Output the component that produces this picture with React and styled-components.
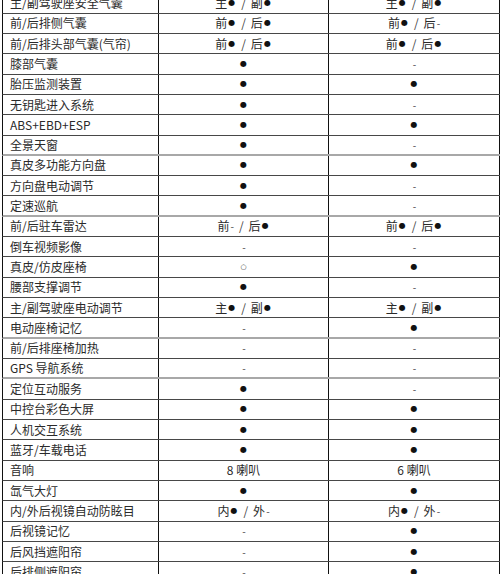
import React from 'react'
import styled, { createGlobalStyle } from 'styled-components'

const GlobalStyle = createGlobalStyle`
  html, body {
    margin: 0;
    padding: 0;
    background: #fff;
    overflow: hidden;
  }
`

const rowHeight = 20.33

const Table = styled.div`
  width: 498px;
  margin: -6.8px 0 0 2px;
  font-family: 'Noto Sans CJK SC', 'Noto Sans', sans-serif;
  font-size: 12px;
  color: #2a2a2a;
`

const Row = styled.div`
  display: grid;
  grid-template-columns: 156px 170px 171px;
  height: ${rowHeight}px;
  box-sizing: border-box;
  border-left: 1px solid #111;
  border-bottom: ${p => (p.light ? '2px solid #a8a8a8' : '1px solid #474747')};
`

const Cell = styled.div`
  display: flex;
  align-items: center;
  justify-content: ${p => (p.left ? 'flex-start' : 'center')};
  padding-left: ${p => (p.left ? '7px' : '0')};
  border-right: 1px solid #111;
  white-space: nowrap;
  line-height: 1;
`

const Dot = styled.span`
  font-family: 'DejaVu Sans', sans-serif;
  font-size: 8px;
  margin: 0 1px;
  color: #111;
`

const Ring = styled.span`
  font-family: 'DejaVu Sans', sans-serif;
  font-size: 7px;
  color: #333;
`

const Dash = styled.span`
  font-size: 10px;
  margin-left: 1px;
  color: #444;
`

const Slash = styled.span`
  margin: 0 5px;
  color: #444;
`

const rows = [
  ['主/副驾驶座安全气囊', '主● / 副●', '主● / 副●'],
  ['前/后排侧气囊', '前● / 后●', '前● / 后-'],
  ['前/后排头部气囊(气帘)', '前● / 后●', '前● / 后●'],
  ['膝部气囊', '●', '-'],
  ['胎压监测装置', '●', '●'],
  ['无钥匙进入系统', '●', '-'],
  ['ABS+EBD+ESP', '●', '●'],
  ['全景天窗', '●', '-', true],
  ['真皮多功能方向盘', '●', '●'],
  ['方向盘电动调节', '●', '-'],
  ['定速巡航', '●', '-', true],
  ['前/后驻车雷达', '前- / 后●', '前● / 后●'],
  ['倒车视频影像', '-', '-'],
  ['真皮/仿皮座椅', '○', '●'],
  ['腰部支撑调节', '●', '-'],
  ['主/副驾驶座电动调节', '主● / 副●', '主● / 副●'],
  ['电动座椅记忆', '-', '●', true],
  ['前/后排座椅加热', '-', '-'],
  ['GPS 导航系统', '-', '-', true],
  ['定位互动服务', '●', '-'],
  ['中控台彩色大屏', '●', '●'],
  ['人机交互系统', '●', '●'],
  ['蓝牙/车载电话', '●', '●'],
  ['音响', '8 喇叭', '6 喇叭'],
  ['氙气大灯', '●', '●'],
  ['内/外后视镜自动防眩目', '内● / 外-', '内● / 外-'],
  ['后视镜记忆', '-', '●'],
  ['后风挡遮阳帘', '-', '●'],
  ['后排侧遮阳帘', '-', '●']
]

// turn the marks into small glyphs, keep the rest as text
const renderValue = value =>
  value.split(' / ').map((part, i) => (
    <React.Fragment key={i}>
      {i > 0 && <Slash>/</Slash>}
      {part.split('').map((ch, j) => {
        if (ch === '●') return <Dot key={j}>●</Dot>
        if (ch === '○') return <Ring key={j}>○</Ring>
        if (ch === '-') return <Dash key={j}>-</Dash>
        return <span key={j}>{ch === ' ' ? '\u00a0' : ch}</span>
      })}
    </React.Fragment>
  ))

const App = () => (
  <>
    <GlobalStyle />
    <Table>
      {rows.map(([label, a, b, light], index) => (
        <Row key={index} light={light}>
          <Cell left>{label}</Cell>
          <Cell>{renderValue(a)}</Cell>
          <Cell>{renderValue(b)}</Cell>
        </Row>
      ))}
    </Table>
  </>
)

export default App
